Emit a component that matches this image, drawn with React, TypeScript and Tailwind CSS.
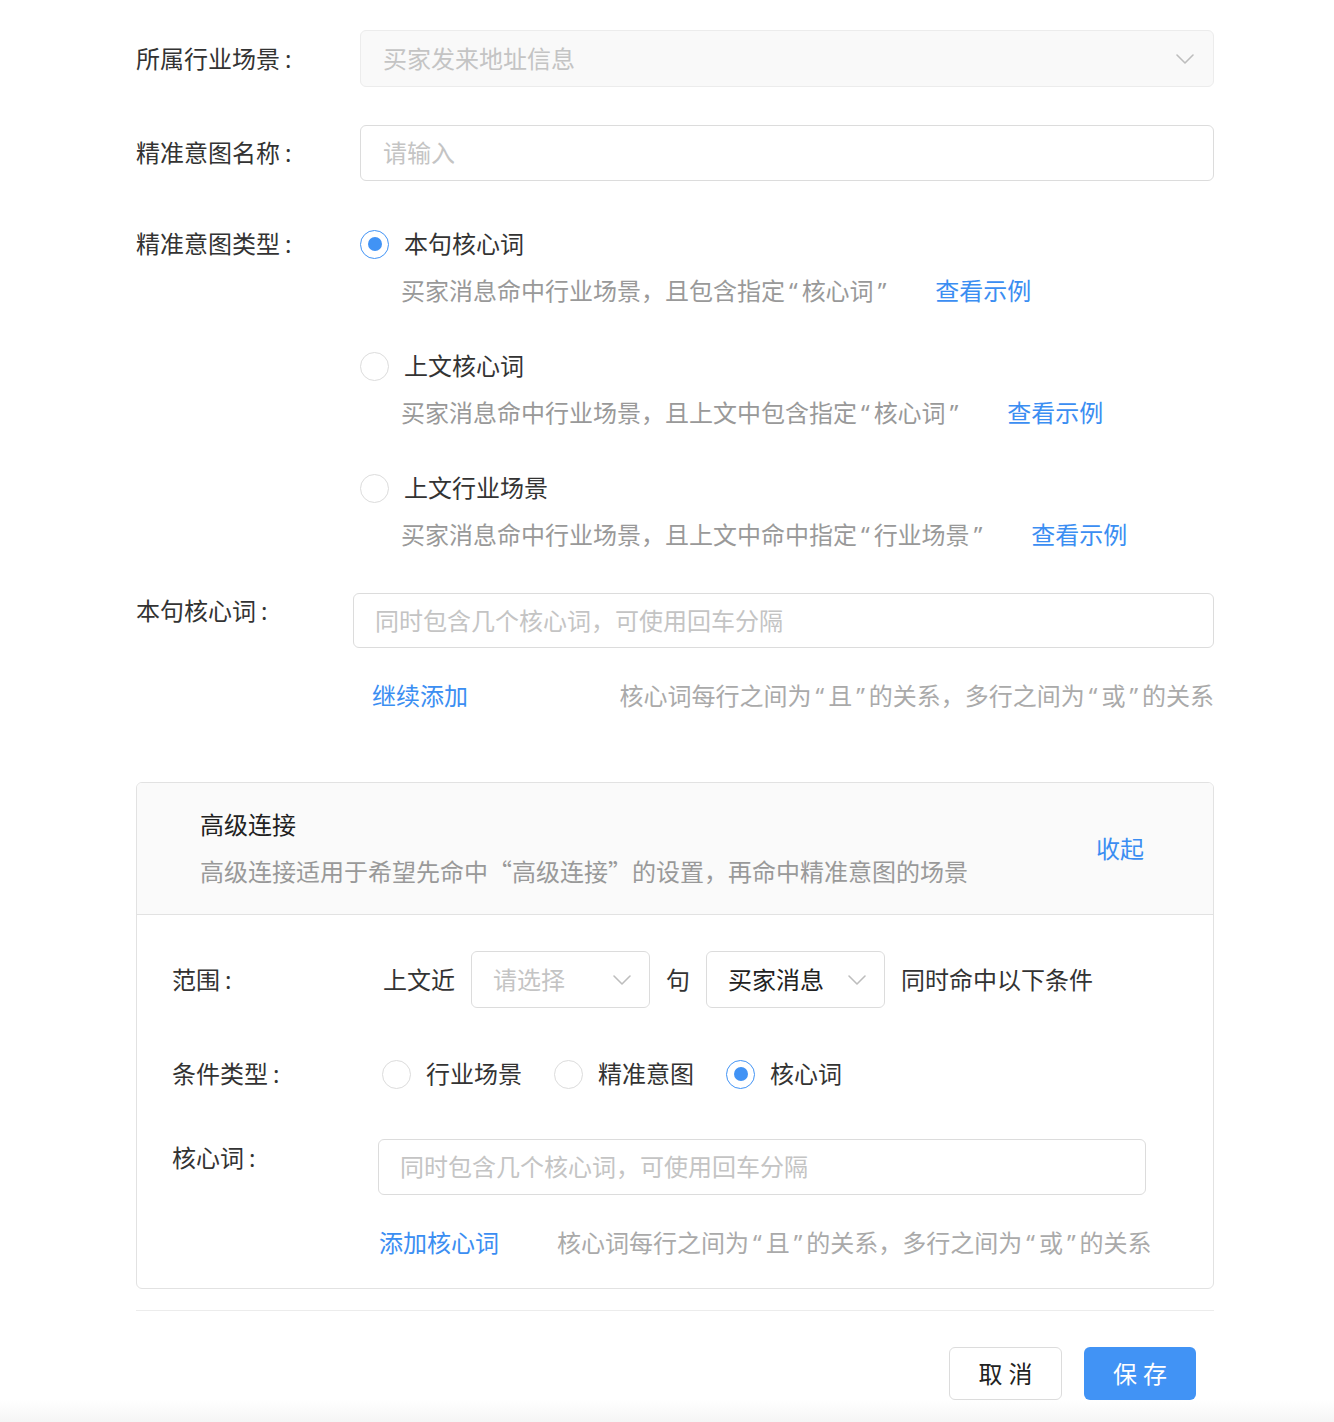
import React from 'react';

const Chevron = ({ className = '' }: { className?: string }) => (
  <svg width="20" height="12" viewBox="0 0 20 12" fill="none" className={className}>
    <path d="M2 2l8 8 8-8" stroke="#bdbdbd" strokeWidth="1.6" strokeLinecap="round" strokeLinejoin="round" />
  </svg>
);

const Radio = ({ checked }: { checked?: boolean }) => (
  <span
    className={`flex h-[29px] w-[29px] shrink-0 items-center justify-center rounded-full border bg-white ${
      checked ? 'border-[#4193f5]' : 'border-[#dcdcdc]'
    }`}
  >
    {checked && <span className="h-[14px] w-[14px] rounded-full bg-[#4193f5]" />}
  </span>
);

// quotes get a little air on each side, like the original font
const withQuotes = (text: string) =>
  text.split(/([“”])/).map((part, i) =>
    part === '“' || part === '”' ? (
      <span key={i} className="px-[4px]">
        {part}
      </span>
    ) : (
      part
    )
  );

const Label = ({ text, className = '' }: { text: string; className?: string }) => (
  <div className={`shrink-0 ${className}`}>
    {text}
    <span className="ml-[5px]">:</span>
  </div>
);

interface OptionProps {
  title: string;
  desc: string;
  checked?: boolean;
}

const TypeOption: React.FC<OptionProps> = ({ title, desc, checked }) => (
  <div>
    <div className="flex h-[34px] items-center gap-[15px]">
      <Radio checked={checked} />
      <span className="text-[#333]">{title}</span>
    </div>
    <div className="mt-[13px] flex h-[34px] items-center pl-[41px]">
      <span className="whitespace-nowrap text-[#999]">{withQuotes(desc)}</span>
      <a className="ml-[45px] whitespace-nowrap text-[#3b8ef2]">查看示例</a>
    </div>
  </div>
);

export default function App() {
  return (
    <div className="relative min-h-[1422px] bg-white font-['Noto_Sans','Noto_Sans_CJK_SC',sans-serif] text-[24px] leading-[34px] text-[#333]">
      <div className="ml-[136px] w-[1078px] pt-[30px]">
        {/* 所属行业场景 */}
        <div className="flex items-center">
          <Label text="所属行业场景" className="w-[224px]" />
          <div className="flex h-[57px] flex-1 items-center justify-between rounded-[6px] border border-[#ececec] bg-[#f9f9f9] pl-[22px] pr-[18px]">
            <span className="text-[#c4c4c4]">买家发来地址信息</span>
            <Chevron />
          </div>
        </div>

        {/* 精准意图名称 */}
        <div className="mt-[38px] flex items-center">
          <Label text="精准意图名称" className="w-[224px]" />
          <div className="flex h-[56px] flex-1 items-center rounded-[6px] border border-[#dcdcdc] bg-white pl-[22px]">
            <span className="text-[#c4c4c4]">请输入</span>
          </div>
        </div>

        {/* 精准意图类型 */}
        <div className="mt-[46px] flex items-start">
          <Label text="精准意图类型" className="w-[224px]" />
          <div className="flex flex-1 flex-col gap-[41px]">
            <TypeOption checked title="本句核心词" desc="买家消息命中行业场景，且包含指定“核心词”" />
            <TypeOption title="上文核心词" desc="买家消息命中行业场景，且上文中包含指定“核心词”" />
            <TypeOption title="上文行业场景" desc="买家消息命中行业场景，且上文中命中指定“行业场景”" />
          </div>
        </div>

        {/* 本句核心词 */}
        <div className="mt-[41px] flex items-start">
          <Label text="本句核心词" className="mt-[1px] w-[217px]" />
          <div className="flex h-[55px] flex-1 items-center rounded-[6px] border border-[#dcdcdc] bg-white pl-[21px]">
            <span className="text-[#c4c4c4]">同时包含几个核心词，可使用回车分隔</span>
          </div>
        </div>
        <div className="mt-[31px] flex items-center justify-between pl-[236px]">
          <a className="whitespace-nowrap text-[#3b8ef2]">继续添加</a>
          <span className="whitespace-nowrap text-[#aaa]">
            {withQuotes('核心词每行之间为“且”的关系，多行之间为“或”的关系')}
          </span>
        </div>

        {/* 高级连接 */}
        <div className="mt-[69px] overflow-hidden rounded-[6px] border border-[#e2e2e2]">
          <div className="flex items-center justify-between border-b border-[#e2e2e2] bg-[#fafafa] pb-[25px] pl-[63px] pr-[69px] pt-[25px]">
            <div>
              <div className="text-[#222]">高级连接</div>
              <div className="mt-[12px] whitespace-nowrap text-[#999]">
                高级连接适用于希望先命中
                <span className="font-['Noto_Sans_CJK_SC',sans-serif]">“</span>
                高级连接
                <span className="font-['Noto_Sans_CJK_SC',sans-serif]">”</span>
                的设置，再命中精准意图的场景
              </div>
            </div>
            <a className="text-[#3b8ef2]">收起</a>
          </div>

          <div className="pb-[28px] pl-[35px] pr-[67px] pt-[36px]">
            {/* 范围 */}
            <div className="flex items-center">
              <Label text="范围" className="w-[211px]" />
              <div className="flex items-center gap-[16px]">
                <span>上文近</span>
                <div className="flex h-[57px] w-[179px] items-center justify-between rounded-[6px] border border-[#dcdcdc] bg-white pl-[21px] pr-[17px]">
                  <span className="text-[#c4c4c4]">请选择</span>
                  <Chevron />
                </div>
                <span>句</span>
                <div className="flex h-[57px] w-[179px] items-center justify-between rounded-[6px] border border-[#dcdcdc] bg-white pl-[21px] pr-[17px]">
                  <span className="text-[#222]">买家消息</span>
                  <Chevron />
                </div>
                <span>同时命中以下条件</span>
              </div>
            </div>

            {/* 条件类型 */}
            <div className="mt-[49px] flex items-center">
              <Label text="条件类型" className="w-[210px]" />
              <div className="flex items-center">
                <Radio />
                <span className="ml-[15px]">行业场景</span>
                <span className="ml-[32px]">
                  <Radio />
                </span>
                <span className="ml-[15px]">精准意图</span>
                <span className="ml-[32px]">
                  <Radio checked />
                </span>
                <span className="ml-[15px]">核心词</span>
              </div>
            </div>

            {/* 核心词 */}
            <div className="mt-[48px] flex items-start">
              <Label text="核心词" className="mt-[2px] w-[206px]" />
              <div className="flex h-[56px] flex-1 items-center rounded-[6px] border border-[#dcdcdc] bg-white pl-[21px]">
                <span className="text-[#c4c4c4]">同时包含几个核心词，可使用回车分隔</span>
              </div>
            </div>
            <div className="mt-[31px] flex items-center pl-[207px]">
              <a className="shrink-0 whitespace-nowrap text-[#3b8ef2]">添加核心词</a>
              <span className="ml-[58px] whitespace-nowrap text-[#aaa]">
                {withQuotes('核心词每行之间为“且”的关系，多行之间为“或”的关系')}
              </span>
            </div>
          </div>
        </div>

        {/* footer */}
        <div className="mt-[21px] border-t border-[#ececec]" />
        <div className="flex justify-end gap-[22px] pr-[18px] pt-[36px]">
          <button className="h-[53px] w-[113px] rounded-[6px] border border-[#dcdcdc] bg-white text-[24px] text-[#222]">
            取 消
          </button>
          <button className="h-[53px] w-[112px] rounded-[6px] bg-[#4193f5] text-[24px] text-white">
            保 存
          </button>
        </div>
      </div>
      <div className="absolute bottom-0 left-0 h-[22px] w-full bg-gradient-to-b from-white/0 to-[#f5f5f5]" />
    </div>
  );
}
